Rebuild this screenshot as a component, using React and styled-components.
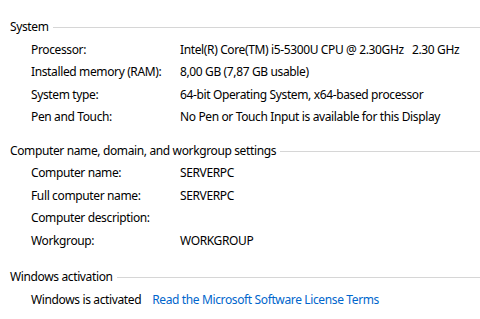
import React from "react";
import styled, { createGlobalStyle } from "styled-components";

const GlobalStyle = createGlobalStyle`
  html, body {
    margin: 0;
    padding: 0;
    background: #ffffff;
  }
  body {
    font-family: "Noto Sans", "Liberation Sans", sans-serif;
    font-size: 12px;
    letter-spacing: -0.37px;
    color: #000000;
  }
`;

const Page = styled.div`
  width: 480px;
  height: 319px;
  padding: 16px 0 0 10px;
  box-sizing: border-box;
  overflow: hidden;
`;

const Section = styled.section`
  margin-top: ${(p) => p.gap || 0}px;
`;

const Header = styled.div`
  display: flex;
  align-items: center;
  height: 22.5px;
  line-height: 22.5px;
  white-space: nowrap;
`;

const HeaderLine = styled.div`
  flex: 1;
  height: 1px;
  margin: 1px 0 0 4px;
  background: #d6d6d6;
`;

const Rows = styled.div`
  padding-left: 21px;
`;

const Row = styled.div`
  display: grid;
  grid-template-columns: 149px 1fr;
  height: 22.5px;
  line-height: 22.5px;
  white-space: pre;
`;

const ActivationRow = styled.div`
  display: flex;
  gap: 11px;
  height: 22.5px;
  line-height: 22.5px;
  white-space: nowrap;
`;

const Link = styled.a`
  color: #0066cc;
  text-decoration: none;
  cursor: pointer;
`;

const system = [
  ["Processor:", "Intel(R) Core(TM) i5-5300U CPU @ 2.30GHz   2.30 GHz"],
  ["Installed memory (RAM):", "8,00 GB (7,87 GB usable)"],
  ["System type:", "64-bit Operating System, x64-based processor"],
  ["Pen and Touch:", "No Pen or Touch Input is available for this Display"],
];

const computer = [
  ["Computer name:", "SERVERPC"],
  ["Full computer name:", "SERVERPC"],
  ["Computer description:", ""],
  ["Workgroup:", "WORKGROUP"],
];

const SectionHeader = ({ title }) => (
  <Header>
    <span>{title}</span>
    <HeaderLine />
  </Header>
);

const App = () => {
  return (
    <>
      <GlobalStyle />
      <Page>
        <Section>
          <SectionHeader title="System" />
          <Rows>
            {system.map(([label, value]) => (
              <Row key={label}>
                <span>{label}</span>
                <span>{value}</span>
              </Row>
            ))}
          </Rows>
        </Section>

        <Section gap={11}>
          <SectionHeader title="Computer name, domain, and workgroup settings" />
          <Rows>
            {computer.map(([label, value]) => (
              <Row key={label}>
                <span>{label}</span>
                <span>{value}</span>
              </Row>
            ))}
          </Rows>
        </Section>

        <Section gap={14}>
          <SectionHeader title="Windows activation" />
          <Rows>
            <ActivationRow>
              <span>Windows is activated</span>
              <Link>Read the Microsoft Software License Terms</Link>
            </ActivationRow>
          </Rows>
        </Section>
      </Page>
    </>
  );
};

export default App;
